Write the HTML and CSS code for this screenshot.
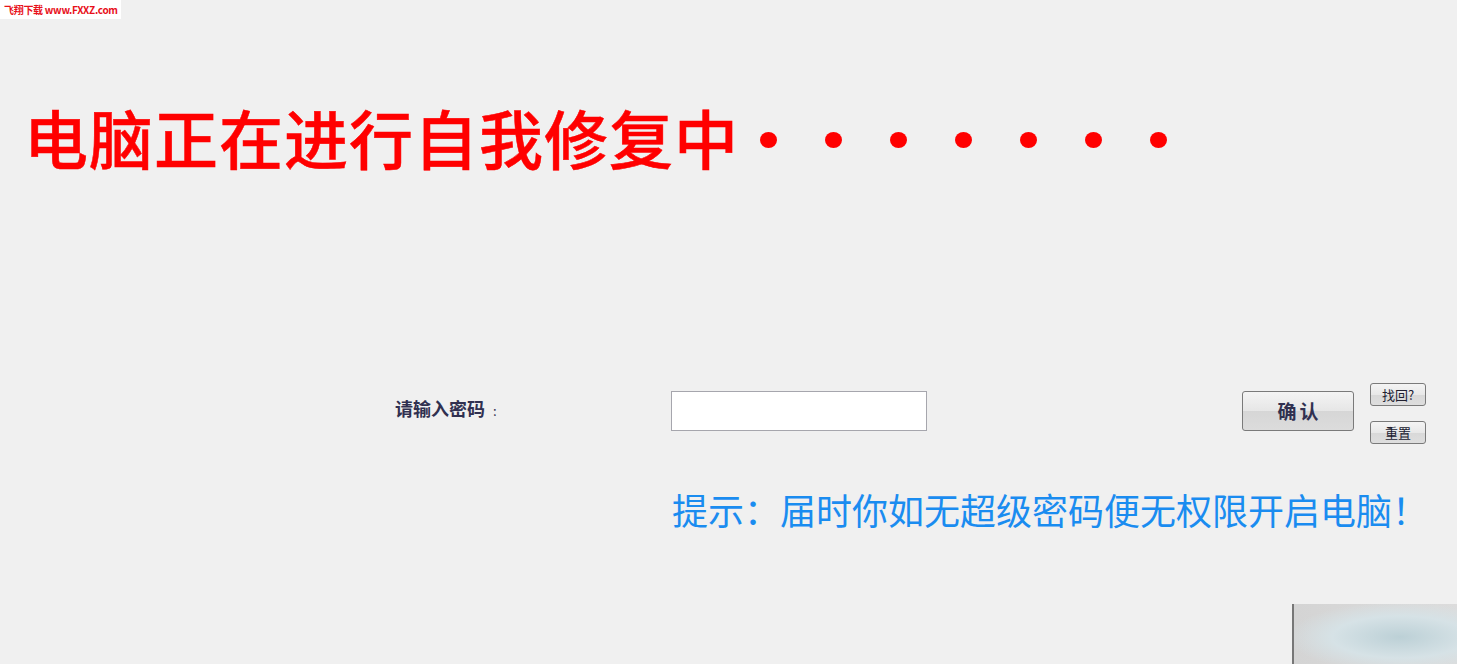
FILE: index.html
```html
<!DOCTYPE html>
<html lang="zh-CN">
<head>
  <meta charset="UTF-8">
  <meta name="viewport" content="width=device-width, initial-scale=1.0">
  <title>电脑正在进行自我修复中</title>
  <link rel="stylesheet" href="styles.css">
</head>
<body>
  <div class="watermark">飞翔下载 www.FXXZ.com</div>

  <div class="headline">
    <h1>电脑正在进行自我修复中</h1>
    <div class="dots">
      <span></span><span></span><span></span><span></span><span></span><span></span><span></span>
    </div>
  </div>

  <div class="login-row">
    <label for="pwd">请输入密码<span class="colon">:</span></label>
    <input id="pwd" type="password">
    <button class="btn-ok">确认</button>
    <div class="side-buttons">
      <button class="btn-small">找回?</button>
      <button class="btn-small">重置</button>
    </div>
  </div>

  <p class="hint">提示：届时你如无超级密码便无权限开启电脑！</p>

  <div class="corner-window"></div>
</body>
</html>
```

FILE: styles.css
```css
body {
  margin: 0;
  padding: 0;
  width: 1457px;
  height: 664px;
  overflow: hidden;
  background: #f0f0f0;
  font-family: "Noto Sans CJK SC", "DejaVu Sans", sans-serif;
  position: relative;
}

.watermark {
  position: absolute;
  top: 0;
  left: 0;
  width: 117px;
  height: 19px;
  padding-left: 4px;
  background: #fff;
  color: #e8101a;
  font-size: 10px;
  font-weight: bold;
  line-height: 19px;
  white-space: nowrap;
  letter-spacing: -0.3px;
}

.headline {
  display: flex;
  align-items: center;
  padding: 103px 0 0 24px;
  height: 66px;
}

.headline h1 {
  margin: 0;
  font-size: 64px;
  line-height: 66px;
  font-weight: 500;
  letter-spacing: 1px;
  color: #ff0000;
  white-space: nowrap;
  -webkit-text-stroke: 0.5px #ff0000;
}

.dots {
  display: flex;
  gap: 48px;
  margin-left: 21px;
  padding-top: 8px;
}

.dots span {
  width: 17px;
  height: 16px;
  border-radius: 50%;
  background: #ff0000;
}

.login-row {
  display: flex;
  align-items: flex-start;
  margin-top: 214px;
  height: 62px;
}

.login-row label {
  width: 276px;
  margin: 13px 0 0 395px;
  font-size: 18px;
  line-height: 24px;
  font-weight: bold;
  color: #303050;
}

.login-row .colon {
  font-weight: normal;
  font-size: 13px;
  margin-left: 8px;
}

.login-row input {
  width: 256px;
  height: 40px;
  box-sizing: border-box;
  border: 1px solid #a6a6ad;
  background: #fff;
  margin: 8px 0 0;
  padding: 0 6px;
  outline: none;
}

.btn-ok {
  width: 112px;
  height: 40px;
  margin: 8px 0 0 315px;
  border: 1px solid #7a7a7a;
  border-radius: 3px;
  background: linear-gradient(#f4f4f4, #e6e6e6 50%, #d6d6d6 51%, #dcdcdc);
  font-family: "Noto Sans CJK SC", sans-serif;
  font-size: 19px;
  font-weight: bold;
  color: #303050;
  letter-spacing: 3px;
  padding: 0 0 2px 3px;
}

.side-buttons {
  display: flex;
  flex-direction: column;
  gap: 15px;
  margin-left: 16px;
}

.btn-small {
  width: 56px;
  height: 23px;
  border: 1px solid #7a7a7a;
  border-radius: 3px;
  background: linear-gradient(#f4f4f4, #e8e8e8 50%, #d8d8d8 51%, #dedede);
  font-family: "Noto Sans CJK SC", sans-serif;
  font-size: 13px;
  color: #202030;
  padding: 0;
  line-height: 20px;
}

.hint {
  margin: 44px 0 0 672px;
  font-size: 36px;
  line-height: 40px;
  color: #1a8cf0;
  white-space: nowrap;
}

.corner-window {
  position: absolute;
  right: 0;
  bottom: 0;
  width: 163px;
  height: 60px;
  border-left: 2px solid #777;
  background:
    radial-gradient(ellipse at 65% 55%, #bcd0d6 0%, #d6e2e6 45%, rgba(220, 220, 220, 0) 75%),
    linear-gradient(90deg, #d4d4d4, #dcdcdc);
}
```
